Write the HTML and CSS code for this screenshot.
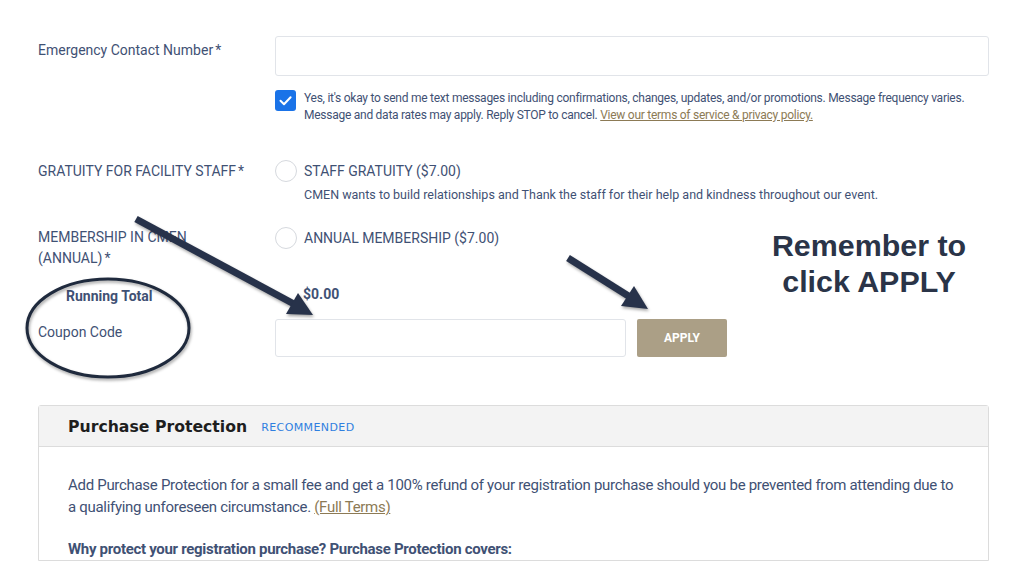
FILE: index.html
```html
<!DOCTYPE html>
<html lang="en">
<head>
<meta charset="utf-8">
<title>Registration</title>
<link rel="stylesheet" href="styles.css">
</head>
<body>
<div class="page">
  <div class="row row-phone">
    <div class="lbl">Emergency Contact Number<span class="req">*</span></div>
    <div class="ctl">
      <div class="input input-full"></div>
      <div class="consent">
        <span class="cb"><svg viewBox="0 0 21 21" width="21" height="21"><path d="M5.5 10.8 L9 14.2 L15.6 7.2" fill="none" stroke="#fff" stroke-width="2" stroke-linecap="round" stroke-linejoin="round"/></svg></span>
        <p>Yes, it's okay to send me text messages including confirmations, changes, updates, and/or promotions. Message frequency varies. Message and data rates may apply. Reply STOP to cancel. <a class="link">View our terms of service &amp; privacy policy.</a></p>
      </div>
    </div>
  </div>

  <div class="row row-grat">
    <div class="lbl caps">GRATUITY FOR FACILITY STAFF<span class="req">*</span></div>
    <div class="ctl">
      <div class="option"><span class="radio"></span><span class="opt-text">STAFF GRATUITY ($7.00)</span></div>
      <p class="desc">CMEN wants to build relationships and Thank the staff for their help and kindness throughout our event.</p>
    </div>
  </div>

  <div class="row row-mem">
    <div class="lbl caps two">MEMBERSHIP IN CMEN (ANNUAL)<span class="req">*</span></div>
    <div class="ctl">
      <div class="option"><span class="radio"></span><span class="opt-text">ANNUAL MEMBERSHIP ($7.00)</span></div>
    </div>
  </div>

  <div class="row row-total">
    <div class="lbl total">Running Total</div>
    <div class="ctl amount">$0.00</div>
  </div>

  <div class="row row-coupon">
    <div class="lbl">Coupon Code</div>
    <div class="ctl coupon">
      <div class="input input-coupon"></div>
      <button class="apply">APPLY</button>
    </div>
  </div>

  <div class="panel">
    <div class="panel-head">
      <span class="panel-title">Purchase Protection</span>
      <span class="badge">RECOMMENDED</span>
    </div>
    <div class="panel-body">
      <p>Add Purchase Protection for a small fee and get a 100% refund of your registration purchase should you be prevented from attending due to a qualifying unforeseen circumstance. <a class="link">(Full Terms)</a></p>
      <p class="why">Why protect your registration purchase? Purchase Protection covers:</p>
    </div>
  </div>

  <div class="note">Remember to<br>click APPLY</div>

  <svg class="marks" width="1024" height="564" viewBox="0 0 1024 564">
    <g class="mk">
      <ellipse cx="108" cy="328" rx="81" ry="49" fill="none" stroke="#1f2a3d" stroke-width="3"/>
      <line x1="136" y1="219" x2="294" y2="304" stroke="#27324a" stroke-width="7"/>
      <polygon points="313,315 286,314 298,293" fill="#27324a"/>
      <line x1="568" y1="258" x2="630" y2="297" stroke="#27324a" stroke-width="7"/>
      <polygon points="648,309 621,306 634,286" fill="#27324a"/>
    </g>
  </svg>
</div>
</body>
</html>
```

FILE: styles.css
```css
* { box-sizing: border-box; }
html, body { margin: 0; padding: 0; background: #fff; }
body {
  font-family: Roboto, "Liberation Sans", Arial, sans-serif;
  color: #3f5174;
  overflow: hidden;
}
p { margin: 0; }
.page {
  position: relative;
  width: 1024px;
  height: 564px;
  padding: 36px 35px 0 38px;
}
.row { display: flex; align-items: flex-start; }
.lbl {
  width: 237px;
  flex: none;
  padding-right: 20px;
  font-size: 14px;
  line-height: 20px;
}
.req { margin-left: 2px; }
.ctl { flex: 1; min-width: 0; }

.row-phone .lbl { padding-top: 4px; }
.input {
  height: 40px;
  border: 1px solid #e1e4e9;
  border-radius: 3px;
  background: #fff;
}
.consent {
  display: flex;
  align-items: flex-start;
  gap: 8px;
  margin-top: 14px;
}
.cb {
  width: 21px;
  height: 21px;
  flex: none;
  border-radius: 3px;
  background: #1a73e8;
  display: flex;
}
.consent p {
  font-size: 12px;
  line-height: 17px;
  letter-spacing: -0.26px;
}
.link {
  color: #8c7a55;
  text-decoration: underline;
}

.row-grat { margin-top: 36px; }
.caps, .option { line-height: 22px; }
.option {
  display: flex;
  align-items: center;
  gap: 7px;
  font-size: 14px;
}
.radio {
  width: 22px;
  height: 22px;
  flex: none;
  border: 1px solid #d6d9de;
  border-radius: 50%;
  background: #fff;
}
.desc {
  margin-top: 4px;
  padding-left: 29px;
  font-size: 12.5px;
  line-height: 18px;
}

.row-mem { margin-top: 23px; }
.lbl.two { line-height: 21px; }

.row-total { margin-top: 17px; }
.total {
  font-weight: 700;
  padding-left: 28px;
}
.amount {
  font-weight: 700;
  font-size: 14px;
  line-height: 20px;
  padding-left: 28px;
  margin-top: -2px;
}

.row-coupon { margin-top: 13px; }
.row-coupon .lbl { padding-top: 3px; }
.coupon { display: flex; gap: 11px; }
.input-coupon { width: 351px; height: 38px; }
.apply {
  width: 90px;
  height: 38px;
  border: 0;
  border-radius: 2px;
  background: #ab9f86;
  color: #fff;
  font-family: Roboto, "Liberation Sans", Arial, sans-serif;
  font-weight: 700;
  font-size: 12px;
  padding: 0;
}

.panel {
  margin-top: 48px;
  width: 951px;
  border: 1px solid #dcdcdc;
  border-radius: 3px 3px 0 0;
}
.panel-head {
  height: 41px;
  background: #f3f3f3;
  border-bottom: 1px solid #dcdcdc;
  display: flex;
  align-items: center;
  padding-left: 29px;
  gap: 14px;
}
.panel-title {
  font-family: "DejaVu Sans", Verdana, sans-serif;
  font-weight: 700;
  font-size: 15.7px;
  color: #1e1e1e;
}
.badge {
  font-family: "DejaVu Sans", Verdana, sans-serif;
  font-size: 11px;
  color: #2f7fe0;
  letter-spacing: 0.4px;
  padding-top: 2px;
}
.panel-body {
  padding: 27px 29px 0;
  font-size: 15px;
  line-height: 22px;
  letter-spacing: -0.3px;
}
.why {
  margin-top: 20px;
  font-weight: 700;
}

.note {
  position: absolute;
  left: 769px;
  top: 227px;
  width: 200px;
  text-align: center;
  font-family: "Liberation Sans", Arial, sans-serif;
  font-weight: 700;
  font-size: 30.4px;
  line-height: 36px;
  color: #2a3448;
}
.marks {
  position: absolute;
  left: 0;
  top: 0;
  pointer-events: none;
}
.mk { filter: drop-shadow(1px 2px 1.5px rgba(0,0,0,0.35)); }
```
